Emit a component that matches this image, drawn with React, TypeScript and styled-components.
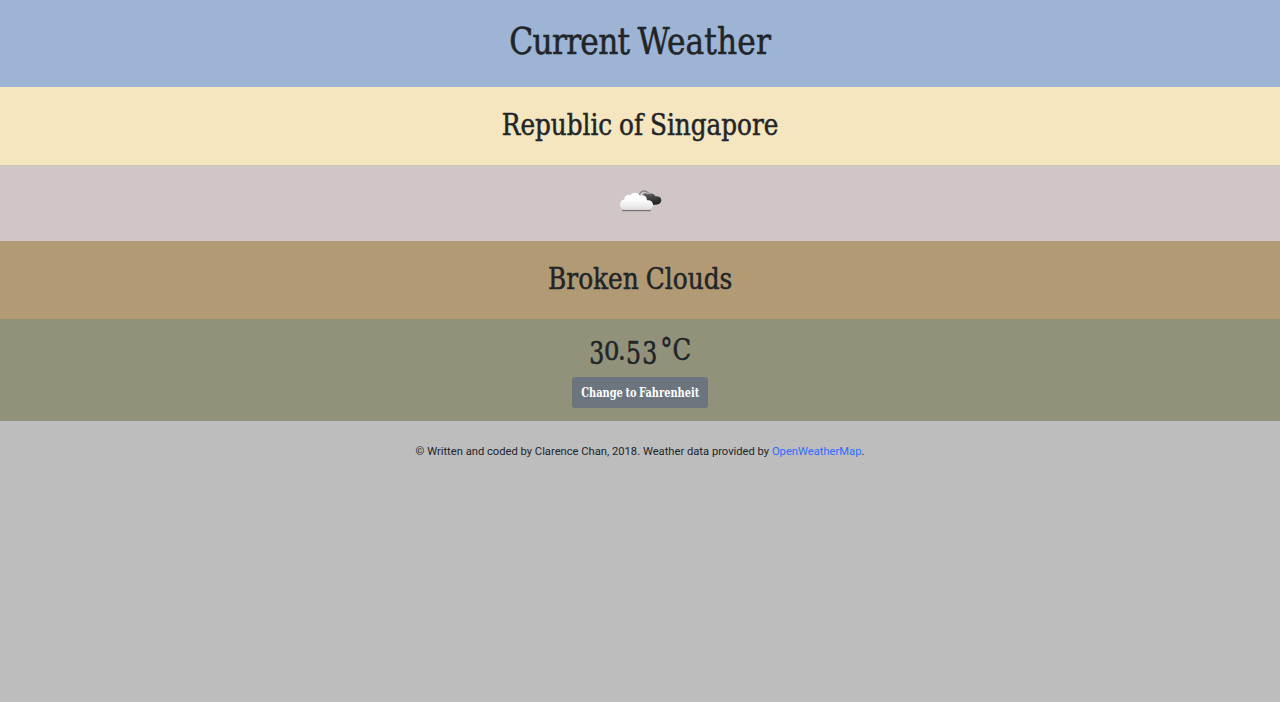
import React from 'react';
import styled, { createGlobalStyle } from 'styled-components';

const Global = createGlobalStyle`
  *, *::before, *::after { box-sizing: border-box; }
  html, body { margin: 0; min-height: 100vh; background: #bdbdbd; }
  body { color: #212529; font-family: "DejaVu Serif Condensed", "DejaVu Serif", serif; font-stretch: condensed; }
`;

const Page = styled.main`
  display: flex;
  flex-direction: column;
`;

const Band = styled.section<{ $color: string; $height: number; $top: number }>`
  display: flex;
  flex-direction: column;
  align-items: center;
  height: ${(p) => p.$height}px;
  padding-top: ${(p) => p.$top}px;
  background: ${(p) => p.$color};
`;

const Heading = styled.h2<{ $size: number; $line: number; $stretch: number; $gap?: number }>`
  margin: 0;
  font-size: ${(p) => p.$size}px;
  line-height: ${(p) => p.$line}px;
  font-weight: 400;
  white-space: nowrap;
  word-spacing: ${(p) => p.$gap ?? 0}px;
  -webkit-text-stroke: 0.5px currentColor;
  transform: scaleX(${(p) => p.$stretch});
`;

const Word = styled.span<{ $tracking: number }>`
  letter-spacing: ${(p) => p.$tracking}px;
`;

const Digit = styled.span<{ $drop?: number; $size?: number; $stretch?: number; $space?: number }>`
  display: inline-block;
  font-size: ${(p) => p.$size ?? 31}px;
  line-height: 1;
  margin: 0 ${(p) => p.$space ?? 0}px;
  transform: translateY(${(p) => p.$drop ?? 0}px) scaleX(${(p) => p.$stretch ?? 0.94});
`;

const Degree = styled.span`
  display: inline-block;
  font-size: 33px;
  line-height: 30px;
  margin-right: -1px;
  transform: translateY(2px) scaleX(0.92);
`;

const UnitButton = styled.button`
  display: flex;
  align-items: center;
  justify-content: center;
  width: 136px;
  height: 31px;
  margin-top: 8px;
  padding: 0;
  border: 0;
  border-radius: 3px;
  background: #6c757d;
  color: #fff;
  font: 700 13px/21px "DejaVu Serif Condensed", "DejaVu Serif", serif;
  font-stretch: condensed;
`;

const ButtonLabel = styled.span`
  white-space: nowrap;
  word-spacing: -1px;
  transform: scaleX(0.84);
`;

const Footer = styled.footer`
  padding-top: 22px;
  text-align: center;
  font: 400 11.2px/17px Roboto, sans-serif;
`;

const Link = styled.a`
  color: #2f6cff;
  text-decoration: none;
`;

const CloudIcon = () => (
  <svg width="44" height="24" viewBox="-1 0.7 44 24" aria-hidden="true">
    <defs>
      <linearGradient id="light" x1="0" y1="0" x2="0" y2="1">
        <stop offset="0.4" stopColor="#fff" />
        <stop offset="1" stopColor="#dedede" />
      </linearGradient>
      <linearGradient id="dark" x1="0" y1="0" x2="0.3" y2="1">
        <stop offset="0" stopColor="#666" />
        <stop offset="1" stopColor="#222" />
      </linearGradient>
    </defs>
    <path d="M20 7C20.500 2.500 24 0.500 28 2.500L30 4" fill="none" stroke="#888" strokeWidth="1.3" />
    <path d="M23 7C24 3.500 27 3 29 5C32 3.300 35.500 4.500 36.500 7C40 6.500 42.300 8 42.300 10.800C42.300 13.500 40 15.500 37 15.500H29Z" fill="url(#dark)" />
    <path d="M4 21.200H31" fill="none" stroke="#777" strokeWidth="1.700" strokeLinecap="round" />
    <path d="M5.500 20.500C2.500 20.500 1 18.500 1 15.500C1 12.500 3 10.500 5.500 10.300C5 7 8 5 11 6C13 2.800 19 2.300 21 6.500C24.500 5 28 7 28 11C31.500 10.500 34 12.500 34 15.500C34 18.500 32 20.500 29 20.500Z" fill="url(#light)" />
  </svg>
);

export default function App() {
  return (
    <Page>
      <Global />
      <Band $color="#9db4d5" $height={87} $top={18}>
        <Heading as="h1" $size={37} $line={48} $stretch={0.94} $gap={-2}>
          <Word $tracking={-0.8}>Current</Word> <Word $tracking={0.15}>Weather</Word>
        </Heading>
      </Band>
      <Band $color="#f6e6c0" $height={78} $top={19}>
        <Heading $size={30} $line={38} $stretch={0.915} $gap={-1}>Republic of Singapore</Heading>
      </Band>
      <Band $color="#cfc6c5" $height={76} $top={25}>
        <CloudIcon />
      </Band>
      <Band $color="#b29a74" $height={78} $top={19}>
        <Heading $size={30} $line={38} $stretch={0.92} $gap={-1}>Broken Clouds</Heading>
      </Band>
      <Band $color="#92927b" $height={102} $top={12}>
        <Heading $size={30} $line={38} $stretch={0.9} $gap={-6}>
          <Digit $drop={4}>3</Digit><Digit $size={26} $stretch={1.15}>0</Digit>.<Digit $drop={4}>5</Digit><Digit $drop={4}>3</Digit> <Degree>°</Degree>C
        </Heading>
        <UnitButton type="button"><ButtonLabel>Change to Fahrenheit</ButtonLabel></UnitButton>
      </Band>
      <Footer>
        © Written and coded by Clarence Chan, 2018. Weather data provided by <Link href="#">OpenWeatherMap</Link>.
      </Footer>
    </Page>
  );
}
